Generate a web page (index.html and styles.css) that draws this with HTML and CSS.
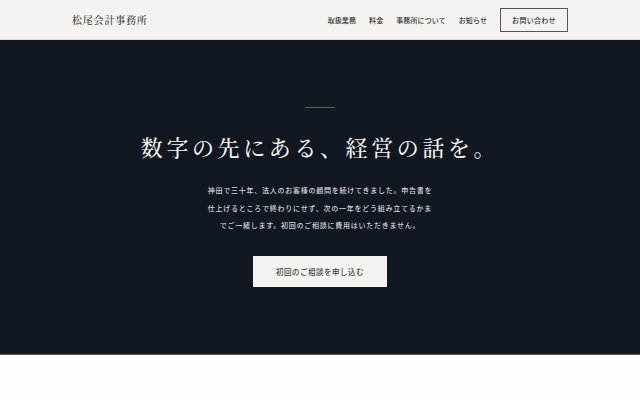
FILE: index.html
```html
<!DOCTYPE html>
<html lang="ja">
<head>
<meta charset="utf-8">
<title>松尾会計事務所</title>
<link rel="stylesheet" href="styles.css">
</head>
<body>
<header class="site-header">
  <div class="logo">松尾会計事務所</div>
  <nav class="nav">
    <a class="nav-link" href="#">取扱業務</a>
    <a class="nav-link" href="#">料金</a>
    <a class="nav-link" href="#">事務所について</a>
    <a class="nav-link" href="#">お知らせ</a>
    <a class="nav-cta" href="#">お問い合わせ</a>
  </nav>
</header>
<section class="hero">
  <div class="rule"></div>
  <h1 class="title">数字の先にある、経営の話を。</h1>
  <p class="lead">神田で三十年、法人のお客様の顧問を続けてきました。申告書を<br>仕上げるところで終わりにせず、次の一年をどう組み立てるかま<br>でご一緒します。初回のご相談に費用はいただきません。</p>
  <a class="cta" href="#">初回のご相談を申し込む</a>
</section>
<section class="after"></section>
</body>
</html>
```
FILE: styles.css
```css
* { box-sizing: border-box; }
html, body { margin: 0; padding: 0; }
body {
  background: #fefefe;
  font-family: "Noto Sans CJK JP", "Noto Sans", sans-serif;
  color: #222;
}
a { text-decoration: none; }
.site-header {
  height: 40px;
  background: #f4f3f0;
  display: flex;
  align-items: center;
  justify-content: space-between;
  padding: 0 72px;
  border-bottom: 1px solid #d9d8d4;
}
.logo {
  font-family: "Noto Serif CJK JP", "Noto Serif JP", serif;
  font-size: 10px;
  font-weight: 500;
  letter-spacing: 0.8px;
  color: #333;
}
.nav {
  display: flex;
  align-items: center;
  gap: 13px;
}
.nav-link {
  font-size: 7px;
  font-weight: 500;
  letter-spacing: 0.1px;
  color: #333;
}
.nav-cta {
  font-size: 7px;
  font-weight: 500;
  letter-spacing: 0.3px;
  color: #333;
  border: 1px solid #555;
  height: 24px;
  width: 68px;
  display: flex;
  align-items: center;
  justify-content: center;
}
.hero {
  height: 315px;
  background: #111822;
  display: flex;
  flex-direction: column;
  align-items: center;
  padding-top: 67px;
  border-bottom: 1px solid #555c66;
}
.rule {
  width: 30px;
  height: 1px;
  background: #5f604a;
}
.title {
  margin: 21px 0 0;
  font-family: "Noto Serif CJK JP", "Noto Serif JP", serif;
  font-weight: 500;
  font-size: 22px;
  letter-spacing: 3.6px;
  line-height: 36px;
  color: #f5f4f0;
}
.lead {
  margin: 17px 0 0;
  font-size: 7px;
  font-weight: 500;
  line-height: 17.5px;
  letter-spacing: 0.75px;
  color: #d5d6d8;
  text-align: center;
}
.cta {
  margin-top: 21px;
  width: 134px;
  height: 31px;
  background: #f4f3f0;
  color: #444;
  font-size: 7.5px;
  font-weight: 500;
  letter-spacing: 0.5px;
  display: flex;
  align-items: center;
  justify-content: center;
}
```
